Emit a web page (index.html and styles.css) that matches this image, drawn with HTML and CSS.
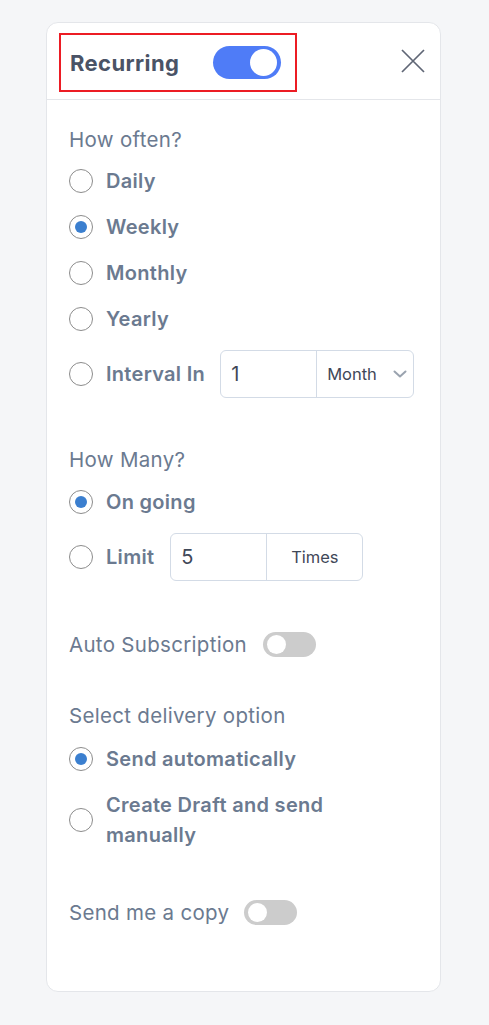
FILE: index.html
```html
<!DOCTYPE html>
<html lang="en">
<head>
<meta charset="utf-8">
<title>Recurring</title>
<link rel="stylesheet" href="styles.css">
</head>
<body>
<div class="card">
  <div class="header">
    <div class="highlight">
      <span class="title">Recurring</span>
      <span class="switch switch-on"><span class="knob"></span></span>
    </div>
    <button class="close" aria-label="Close">
      <svg width="24" height="24" viewBox="0 0 24 24"><path d="M1 1 L23 23 M23 1 L1 23" stroke="#5f6675" stroke-width="1.7" fill="none"/></svg>
    </button>
  </div>
  <div class="body">
    <section class="section first">
      <div class="label">How often?</div>
      <div class="options">
        <div class="opt"><span class="radio"></span><span class="opt-text">Daily</span></div>
        <div class="opt"><span class="radio checked"></span><span class="opt-text">Weekly</span></div>
        <div class="opt"><span class="radio"></span><span class="opt-text">Monthly</span></div>
        <div class="opt"><span class="radio"></span><span class="opt-text">Yearly</span></div>
        <div class="opt opt-input"><span class="radio"></span><span class="opt-text">Interval In</span>
          <div class="combo combo-interval">
            <span class="field">1</span>
            <span class="addon select">Month
              <svg width="14" height="8" viewBox="0 0 14 8"><path d="M1.5 1.5 L7 6.5 L12.5 1.5" stroke="#9aa3af" stroke-width="2" fill="none" stroke-linecap="round" stroke-linejoin="round"/></svg>
            </span>
          </div>
        </div>
      </div>
    </section>
    <section class="section">
      <div class="label">How Many?</div>
      <div class="options">
        <div class="opt"><span class="radio checked"></span><span class="opt-text">On going</span></div>
        <div class="opt opt-input"><span class="radio"></span><span class="opt-text">Limit</span>
          <div class="combo combo-limit">
            <span class="field">5</span>
            <span class="addon times">Times</span>
          </div>
        </div>
      </div>
    </section>
    <section class="section toggle-row auto">
      <span class="label">Auto Subscription</span>
      <span class="switch switch-off"><span class="knob"></span></span>
    </section>
    <section class="section delivery">
      <div class="label">Select delivery option</div>
      <div class="options">
        <div class="opt"><span class="radio checked"></span><span class="opt-text">Send automatically</span></div>
        <div class="opt"><span class="radio"></span><span class="opt-text wrap">Create Draft and send manually</span></div>
      </div>
    </section>
    <section class="section toggle-row copy">
      <span class="label">Send me a copy</span>
      <span class="switch switch-off"><span class="knob"></span></span>
    </section>
  </div>
</div>
</body>
</html>
```
FILE: styles.css
```css
* { box-sizing: border-box; }
html, body { margin: 0; padding: 0; }
body {
  background: #f5f6f8;
  font-family: Inter, "Noto Sans", "Liberation Sans", sans-serif;
  color: #6b7a90;
}
.card {
  margin: 22px 0 0 46px;
  width: 395px;
  height: 970px;
  background: #fff;
  border: 1px solid #e4e6ea;
  border-radius: 12px;
}
.header {
  height: 77px;
  border-bottom: 1px solid #e4e6ea;
  display: flex;
  align-items: flex-start;
  justify-content: space-between;
  padding: 10px 15px 0 12px;
}
.highlight {
  width: 238px;
  height: 59px;
  border: 2px solid #ec1c24;
  display: flex;
  align-items: center;
  padding-left: 9px;
  gap: 34px;
}
.title {
  font-size: 22px;
  font-weight: 700;
  color: #4a5366;
  letter-spacing: 0.4px;
}
.switch {
  position: relative;
  display: inline-block;
  flex: none;
  border-radius: 20px;
}
.switch .knob {
  position: absolute;
  background: #fff;
  border-radius: 50%;
}
.switch-on {
  width: 68px;
  height: 33px;
  background: #4f7cf7;
}
.switch-on .knob {
  width: 27px;
  height: 27px;
  top: 3px;
  right: 4px;
}
.switch-off {
  width: 53px;
  height: 25px;
  background: #cccccc;
}
.switch-off .knob {
  width: 19px;
  height: 19px;
  top: 3px;
  left: 4px;
}
.close {
  border: 0;
  background: none;
  padding: 0;
  margin-top: 16px;
  width: 24px;
  height: 24px;
  display: block;
}
.close svg { display: block; }
.body {
  padding: 28px 22px 0 22px;
}
.section { margin-top: 50px; }
.section.first { margin-top: 0; }
.label {
  font-size: 20.5px;
  line-height: 24px;
  font-weight: 400;
  letter-spacing: 0.3px;
  color: #6b7a90;
}
.options {
  margin-top: 14px;
  display: flex;
  flex-direction: column;
  gap: 16px;
}
.section:not(.first) .options { margin-top: 15px; }
.opt {
  display: flex;
  align-items: center;
  gap: 13px;
}
.opt-text {
  font-size: 20px;
  line-height: 30px;
  font-weight: 600;
  letter-spacing: 0.3px;
  color: #6b7a90;
}
.opt-text.wrap { max-width: 250px; }
.radio {
  flex: none;
  width: 24px;
  height: 24px;
  border: 1.5px solid #8c8c8c;
  border-radius: 50%;
  position: relative;
  background: #fff;
}
.radio.checked::after {
  content: "";
  position: absolute;
  left: 4.5px;
  top: 4.5px;
  width: 12px;
  height: 12px;
  border-radius: 50%;
  background: #3b7fcf;
}
.combo {
  display: flex;
  height: 48px;
  border: 1px solid #d3dbe6;
  border-radius: 6px;
}
.combo-interval { margin-left: 2px; }
.combo-limit { margin-left: 3px; }
.field {
  width: 96px;
  display: flex;
  align-items: center;
  padding-left: 10px;
  font-size: 20px;
  color: #3f4858;
  border-right: 1px solid #d3dbe6;
}
.addon {
  display: flex;
  align-items: center;
  font-size: 16.5px;
  color: #3f4858;
}
.select {
  width: 96px;
  padding-left: 10px;
  gap: 16px;
}
.times {
  width: 95px;
  justify-content: center;
}
.toggle-row {
  display: flex;
  align-items: center;
  gap: 16px;
}
.auto { margin-top: 51px; }
.section.delivery { margin-top: 47px; }
.section.delivery .options { margin-top: 16px; }
.copy { margin-top: 50px; gap: 15px; }
```
